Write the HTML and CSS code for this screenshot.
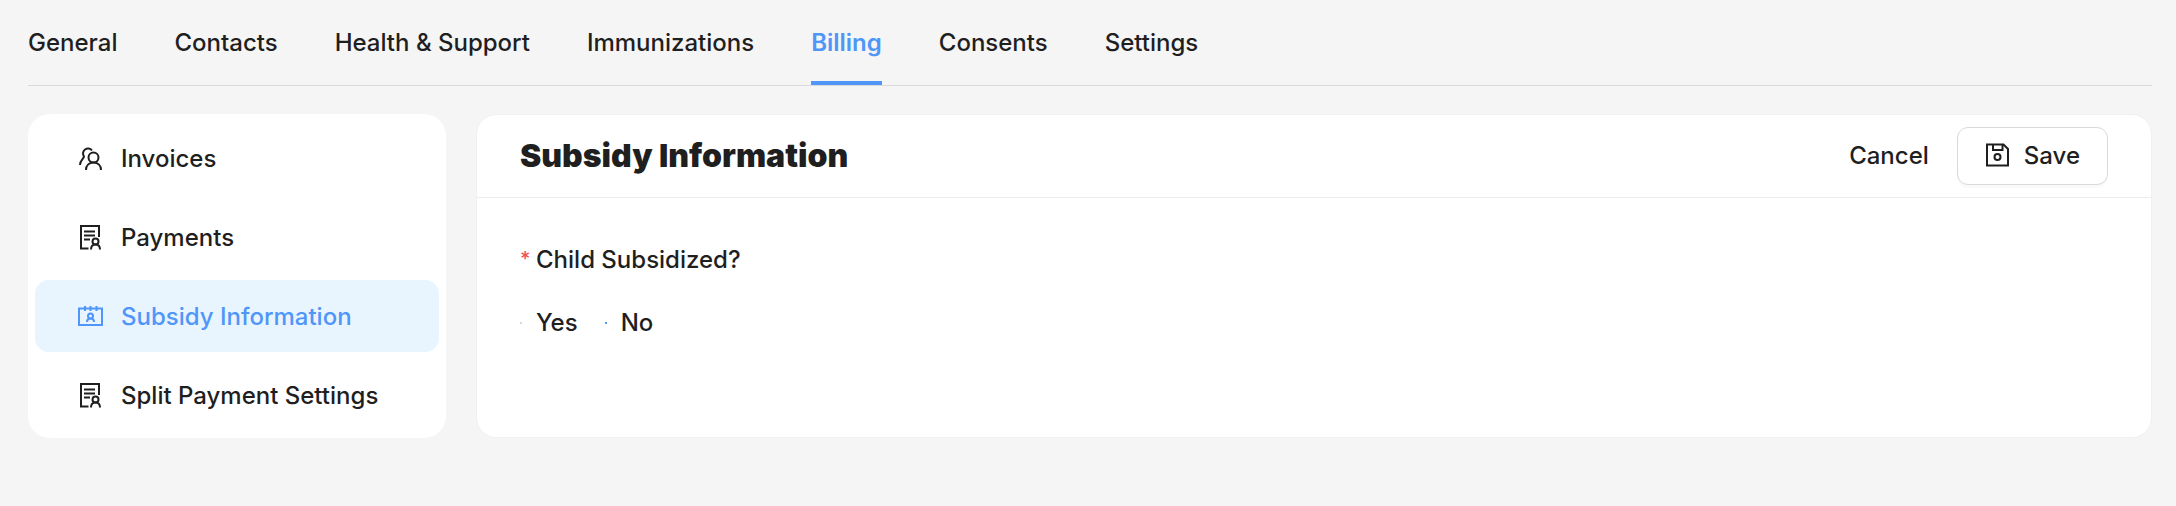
FILE: index.html
```html
<!DOCTYPE html>
<html lang="en">
<head>
  <meta charset="UTF-8">
  <title>Billing - Subsidy Information</title>
  <link rel="stylesheet" href="styles.css">
</head>
<body>
  <nav class="tabs">
    <a href="#general">General</a>
    <a href="#contacts">Contacts</a>
    <a href="#health">Health &amp; Support</a>
    <a href="#immunizations">Immunizations</a>
    <a href="#billing" class="active">Billing</a>
    <a href="#consents">Consents</a>
    <a href="#settings">Settings</a>
  </nav>

  <div class="layout">
    <nav class="sidebar">
      <a href="#invoices">
        <svg class="icon" viewBox="0 0 28 28">
          <path d="M15 5.5a5 5 0 1 0-8 6C6.5 14.5 3 15 3 20"/>
          <circle cx="16.5" cy="12.5" r="5"/>
          <path d="M9 25c0-5 3.500-7.500 7.500-7.500S24 20 24 25"/>
        </svg>
        Invoices
      </a>
      <a href="#payments">
        <svg class="icon" viewBox="0 0 28 28">
          <path d="M11.500 24.500H4V2h18v11M7 7.500h11M7 11.500h11M7 15.500h6"/>
          <circle cx="18.500" cy="17.500" r="3"/>
          <path d="M14 25.500c0-3.500 1.500-5 4.500-5s4.500 1.500 4.500 5"/>
        </svg>
        Payments
      </a>
      <a href="#subsidy" class="active">
        <svg class="icon" viewBox="0 0 28 28">
          <path d="M2 5.500h23v16.500H2zM8 3v5M13.500 3v5M19.500 3v5"/>
          <circle cx="13.500" cy="13" r="2.500"/>
          <path d="M10 19c0-2.500 1.500-3.500 3.500-3.500s3.500 1 3.500 3.500"/>
        </svg>
        Subsidy Information
      </a>
      <a href="#split">
        <svg class="icon" viewBox="0 0 28 28">
          <path d="M11.500 24.500H4V2h18v11M7 7.500h11M7 11.500h11M7 15.500h6"/>
          <circle cx="18.500" cy="17.500" r="3"/>
          <path d="M14 25.500c0-3.500 1.500-5 4.500-5s4.500 1.500 4.500 5"/>
        </svg>
        Split Payment Settings
      </a>
    </nav>

    <form class="card">
      <header class="card-header">
        <h1>Subsidy Information</h1>
        <button type="button" class="btn-text">Cancel</button>
        <button type="submit" class="btn">
          <svg class="icon" viewBox="0 0 28 28">
            <path d="M3 2.500h16.500L24 7v16.500H3zM9 2.500v5.500h9.500V2.500"/>
            <circle cx="13.500" cy="15" r="3"/>
          </svg>
          Save
        </button>
      </header>
      <fieldset class="card-body">
        <legend><span class="required">*</span>Child Subsidized?</legend>
        <div class="radios">
          <label><input type="radio" name="subsidized" value="yes">Yes</label>
          <label><input type="radio" name="subsidized" value="no" checked>No</label>
        </div>
      </fieldset>
    </form>
  </div>
</body>
</html>
```
FILE: styles.css
```css
* { box-sizing: border-box; }
body {
  margin: 0;
  padding: 0 24px 0 28px;
  background: #f5f5f5;
  color: #1f1f1f;
  font: 500 24px/32px Inter, sans-serif;
}
a { color: inherit; text-decoration: none; }
button { font: inherit; color: inherit; cursor: pointer; }

.tabs { display: flex; gap: 57px; border-bottom: 1px solid #d9d9d9; }
.tabs a { padding: 27px 0 22px; border-bottom: 4px solid transparent; }
.tabs .active { color: #4f96f8; font-weight: 600; border-color: #4f96f8; }

.layout { display: flex; gap: 30px; margin-top: 28px; }

.sidebar {
  display: flex;
  flex-direction: column;
  gap: 7px;
  flex: 0 0 418px;
  padding: 8px 7px 7px;
  background: #fff;
  border-radius: 22px;
}
.sidebar a {
  display: flex;
  align-items: center;
  gap: 16px;
  padding: 21px 42px 19px;
  border-radius: 14px;
  white-space: nowrap;
}
.sidebar .active { background: #e8f4fe; color: #4f96f8; }

.icon { flex: none; width: 28px; height: 28px; fill: none; stroke: currentColor; stroke-width: 2; }

.card {
  flex: 1;
  background: #fff;
  border: 1px solid #f0f0f0;
  border-radius: 20px;
}
.card-header {
  display: flex;
  align-items: center;
  padding: 12px 43px;
  border-bottom: 1px solid #ececec;
}
h1 { flex: 1; margin: 0; font-size: 32px; line-height: 40px; font-weight: 900; }
.btn-text { padding: 0 28px; border: 0; background: none; }
.btn {
  display: flex;
  align-items: center;
  gap: 12px;
  height: 58px;
  padding: 0 27px 0 26px;
  background: #fff;
  border: 1px solid #d9d9d9;
  border-radius: 11px;
  box-shadow: 0 3px 0 rgba(0, 0, 0, .02);
}

.card-body { margin: 0; padding: 31px 43px 0; border: 0; }
.card-body legend { padding: 46px 0 0; }
.required { display: inline-block; width: 16px; color: #f05252; font-size: 20px; vertical-align: 2px; line-height: 20px; }
.radios { display: flex; gap: 27px; }
.radios label { display: flex; align-items: center; gap: 14px; }
.radios input {
  appearance: none;
  width: 2px;
  height: 2px;
  margin: 0;
  background: #d9d9d9;
}
.radios input:checked { background: #4f96f8; }
```
